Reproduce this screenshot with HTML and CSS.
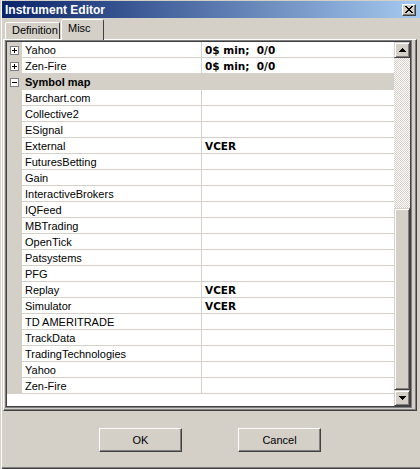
FILE: index.html
```html
<!DOCTYPE html>
<html>
<head>
<meta charset="utf-8">
<title>Instrument Editor</title>
<link rel="stylesheet" href="styles.css">
</head>
<body>
<div class="window">
  <div class="titlebar">
    <span class="title">Instrument Editor</span>
    <div class="close">
      <svg width="8" height="7" viewBox="0 0 8 7" shape-rendering="crispEdges"><path fill="#000" d="M0 0h2v1H0zM6 0h2v1H6zM1 1h2v1H1zM5 1h2v1H5zM2 2h4v1H2zM3 3h2v1H3zM2 4h4v1H2zM1 5h2v1H1zM5 5h2v1H5zM0 6h2v1H0zM6 6h2v1H6z"/></svg>
    </div>
  </div>
  <div class="tabs">
    <div class="tab">Definition</div>
    <div class="tab active">Misc</div>
  </div>
  <div class="panel">
    <div class="grid">
      <div class="grid-in">
        <div class="rows">
          <div class="row"><div class="gut"><svg class="box" width="9" height="9" viewBox="0 0 9 9" shape-rendering="crispEdges"><rect x="0.5" y="0.5" width="8" height="8" fill="#fff" stroke="#808080"/><path fill="#000" d="M2 4h5v1H2zM4 2h1v5H4z"/></svg></div><div class="name">Yahoo</div><div class="val">0$ min;  0/0</div></div>
          <div class="row"><div class="gut"><svg class="box" width="9" height="9" viewBox="0 0 9 9" shape-rendering="crispEdges"><rect x="0.5" y="0.5" width="8" height="8" fill="#fff" stroke="#808080"/><path fill="#000" d="M2 4h5v1H2zM4 2h1v5H4z"/></svg></div><div class="name">Zen-Fire</div><div class="val">0$ min;  0/0</div></div>
          <div class="row group"><div class="gut"><svg class="box" width="9" height="9" viewBox="0 0 9 9" shape-rendering="crispEdges"><rect x="0.5" y="0.5" width="8" height="8" fill="#fff" stroke="#808080"/><path fill="#000" d="M2 4h5v1H2z"/></svg></div><div class="gname">Symbol map</div></div>
          <div class="row"><div class="gut"></div><div class="name">Barchart.com</div><div class="val"></div></div>
          <div class="row"><div class="gut"></div><div class="name">Collective2</div><div class="val"></div></div>
          <div class="row"><div class="gut"></div><div class="name">ESignal</div><div class="val"></div></div>
          <div class="row"><div class="gut"></div><div class="name">External</div><div class="val">VCER</div></div>
          <div class="row"><div class="gut"></div><div class="name">FuturesBetting</div><div class="val"></div></div>
          <div class="row"><div class="gut"></div><div class="name">Gain</div><div class="val"></div></div>
          <div class="row"><div class="gut"></div><div class="name">InteractiveBrokers</div><div class="val"></div></div>
          <div class="row"><div class="gut"></div><div class="name">IQFeed</div><div class="val"></div></div>
          <div class="row"><div class="gut"></div><div class="name">MBTrading</div><div class="val"></div></div>
          <div class="row"><div class="gut"></div><div class="name">OpenTick</div><div class="val"></div></div>
          <div class="row"><div class="gut"></div><div class="name">Patsystems</div><div class="val"></div></div>
          <div class="row"><div class="gut"></div><div class="name">PFG</div><div class="val"></div></div>
          <div class="row"><div class="gut"></div><div class="name">Replay</div><div class="val">VCER</div></div>
          <div class="row"><div class="gut"></div><div class="name">Simulator</div><div class="val">VCER</div></div>
          <div class="row"><div class="gut"></div><div class="name">TD AMERITRADE</div><div class="val"></div></div>
          <div class="row"><div class="gut"></div><div class="name">TrackData</div><div class="val"></div></div>
          <div class="row"><div class="gut"></div><div class="name">TradingTechnologies</div><div class="val"></div></div>
          <div class="row"><div class="gut"></div><div class="name">Yahoo</div><div class="val"></div></div>
          <div class="row"><div class="gut"></div><div class="name">Zen-Fire</div><div class="val"></div></div>
        </div>
        <div class="vscroll">
          <div class="sbtn"><svg width="7" height="4" viewBox="0 0 7 4" shape-rendering="crispEdges"><path fill="#000" d="M3 0h1v1H3zM2 1h3v1H2zM1 2h5v1H1zM0 3h7v1H0z"/></svg></div>
          <div class="track"></div>
          <div class="thumb"></div>
          <div class="sbtn"><svg width="7" height="4" viewBox="0 0 7 4" shape-rendering="crispEdges"><path fill="#000" d="M0 0h7v1H0zM1 1h5v1H1zM2 2h3v1H2zM3 3h1v1H3z"/></svg></div>
        </div>
      </div>
    </div>
  </div>
  <div class="buttons">
    <div class="btn">OK</div>
    <div class="btn">Cancel</div>
  </div>
</div>
</body>
</html>
```

FILE: styles.css
```css
* { box-sizing: border-box; }

body {
  margin: 0;
  background: #d4d0c8;
  font-family: "Liberation Sans", Arial, sans-serif;
  font-size: 11px;
  color: #000;
}

.window {
  width: 420px;
  height: 469px;
  padding: 1px 0 0 2px;
  display: flex;
  flex-direction: column;
  background: #d4d0c8;
  box-shadow: inset 1px 0 #d4d0c8, inset 2px 0 #fff, inset 0 -1px #404040, inset 0 -2px #808080;
}

.titlebar {
  height: 17px;
  flex: none;
  display: flex;
  align-items: center;
  justify-content: space-between;
  padding: 0 4px 0 3px;
  background: linear-gradient(to right, #0a246a, #a6caf0);
  color: #fff;
  font-weight: bold;
  font-size: 12px;
}

.close {
  width: 14px;
  height: 12px;
  background: #d4d0c8;
  border: 1px solid;
  border-color: #fff #404040 #404040 #fff;
  box-shadow: inset -1px -1px #808080;
  display: flex;
  align-items: center;
  justify-content: center;
}

.tabs {
  height: 21px;
  flex: none;
  display: flex;
  align-items: flex-end;
  padding-left: 3px;
}

.tab {
  height: 17px;
  width: 55px;
  border: 1px solid;
  border-bottom: 0;
  border-color: #fff #404040 transparent #fff;
  border-radius: 2px 2px 0 0;
  padding-left: 6px;
  line-height: 15px;
  background: #d4d0c8;
}

.tab.active {
  height: 21px;
  width: 43px;
  margin-left: 1px;
  margin-bottom: -1px;
  position: relative;
  z-index: 1;
  padding-left: 6px;
  line-height: 17px;
}

.panel {
  flex: none;
  width: 414px;
  height: 372px;
  margin-left: 1px;
  border: 1px solid;
  border-color: #fff #404040 #404040 #fff;
  box-shadow: inset -1px -1px #808080;
  padding: 0 4px 2px 1px;
}

.grid {
  width: 407px;
  height: 368px;
  border: 1px solid #808080;
}

.grid-in {
  height: 100%;
  border: 1px solid #404040;
  display: flex;
  background: #fff;
}

.rows {
  width: 387px;
  display: flex;
  flex-direction: column;
  background: #fff;
}

.row {
  display: flex;
  height: 16px;
  flex: none;
}

.gut {
  width: 15px;
  flex: none;
  background: #d4d0c8;
  padding: 4px 0 0 3px;
}

.box { display: block; }

.name {
  width: 180px;
  flex: none;
  border-right: 1px solid #d4d0c8;
  border-bottom: 1px solid #d4d0c8;
  padding: 2px 0 0 3px;
  line-height: 13px;
  white-space: nowrap;
  overflow: hidden;
}

.val {
  flex: 1;
  border-bottom: 1px solid #d4d0c8;
  padding: 2px 0 0 3px;
  line-height: 13px;
  font-family: "DejaVu Sans", Verdana, sans-serif;
  font-weight: bold;
  font-size: 10.5px;
  white-space: pre;
}

.row.group {
  background: #d4d0c8;
}

.gname {
  flex: 1;
  padding: 2px 0 0 3px;
  line-height: 13px;
  font-weight: bold;
}

.vscroll {
  width: 16px;
  flex: none;
  display: flex;
  flex-direction: column;
}

.sbtn,
.thumb {
  background: #d4d0c8;
  border: 1px solid;
  border-color: #d4d0c8 #404040 #404040 #d4d0c8;
  box-shadow: inset 1px 1px #fff, inset -1px -1px #808080;
}

.sbtn {
  height: 16px;
  flex: none;
  display: flex;
  align-items: center;
  justify-content: center;
}

.track {
  height: 150px;
  flex: none;
  background: repeating-conic-gradient(#fff 0 25%, #d4d0c8 0 50%) 0 0 / 2px 2px;
}

.thumb {
  height: 182px;
  flex: none;
}

.buttons {
  display: flex;
  justify-content: center;
  gap: 56px;
  margin-top: 17px;
  padding-right: 2px;
}

.btn {
  width: 83px;
  height: 24px;
  border: 1px solid;
  border-color: #fff #404040 #404040 #fff;
  box-shadow: inset -1px -1px #808080;
  background: #d4d0c8;
  display: flex;
  align-items: center;
  justify-content: center;
}
```
